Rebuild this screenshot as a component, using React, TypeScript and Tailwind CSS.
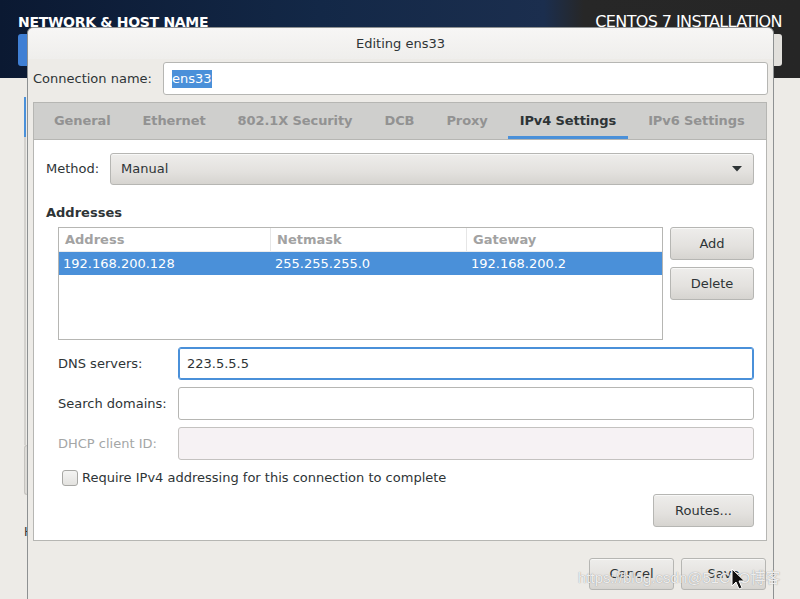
const TABS = [
  { label: 'General', active: false },
  { label: 'Ethernet', active: false },
  { label: '802.1X Security', active: false },
  { label: 'DCB', active: false },
  { label: 'Proxy', active: false },
  { label: 'IPv4 Settings', active: true },
  { label: 'IPv6 Settings', active: false },
];

const btn =
  'flex items-center justify-center rounded-[3px] border border-[#b6b6b3] bg-[linear-gradient(180deg,#eeedeb_0%,#e3e1de_60%,#d6d4d0_100%)] text-[#2e3436] shadow-[inset_0_1px_0_#f8f8f7]';

export default function App() {
  return (
    <div className="relative h-[599px] w-[800px] overflow-hidden bg-[#edebe7] font-['DejaVu_Sans',sans-serif] text-[13px] text-[#2e3436]">
      {/* installer backdrop */}
      <header className="h-[78px] bg-[linear-gradient(90deg,#0b1932_0%,#132847_40%,#1b2e4e_68%,#272727_73%,#262626_100%)] px-[18px] pt-[12px]">
        <div className="flex items-start justify-between">
          <h1 className="text-[14px] font-bold leading-[20px] tracking-[-0.3px] text-white">NETWORK &amp; HOST NAME</h1>
          <span className="text-[16px] leading-[20px] tracking-[-0.6px] text-white">CENTOS 7 INSTALLATION</span>
        </div>
        <div className="mt-[2px] flex justify-between">
          <div className="h-[32px] w-[60px] rounded-[3px] bg-[#3f7fd4]" />
          <div className="h-[32px] w-[40px] rounded-[3px] bg-[#e2e0dc]" />
        </div>
      </header>

      <div className="ml-[24px] mt-[19px] flex w-[80px] flex-col">
        <div className="h-[40px] border-l-[2px] border-[#4a90d9]" />
        <div className="h-[308px] border-l-[2px] border-[#d3d1cd]" />
        <div className="h-[50px] w-[4px] rounded-l-[3px] border border-r-0 border-[#c5c3bf] bg-[#dcdad6]" />
        <span className="mt-[30px] text-[12px] leading-[14px]">H</span>
      </div>

      {/* dialog */}
      <div className="absolute left-[27px] top-[27px] flex h-[590px] w-[747px] flex-col rounded-t-[6px] border border-[#8e9192] bg-[#edebe7]">
        <div className="flex h-[31px] items-center justify-center rounded-t-[6px] bg-[linear-gradient(180deg,#f7f6f5_0%,#efeeec_100%)] text-[13px] text-[#2e3436]">
          Editing ens33
        </div>

        <div className="flex flex-col px-[5px]">
          <div className="mt-[3px] flex h-[33px] items-center">
            <span className="w-[130px]">Connection name:</span>
            <div className="flex h-[33px] flex-1 items-center rounded-[3px] border border-[#b6b6b3] bg-white pl-[8px]">
              <span className="bg-[#4a90d9] leading-[18px] text-white">ens33</span>
            </div>
          </div>

          {/* notebook */}
          <div className="mr-[1px] mt-[7px] flex flex-col border border-[#b6b6b3] bg-white">
            <div className="flex h-[36px] gap-[8px] bg-[#cfcfcd] pl-[8px]">
              {TABS.map(({ label, active }) => (
                <div
                  key={label}
                  className={
                    active
                      ? 'flex items-center border-b-[3px] border-[#4a90d9] px-[12px] pt-[2px] font-bold tracking-[-0.1px] text-[#2e3436]'
                      : 'flex items-center px-[12px] font-bold tracking-[-0.1px] text-[#929292]'
                  }
                >
                  {label}
                </div>
              ))}
            </div>

            <div className="flex flex-col border-t border-[#b6b6b3] px-[12px] pb-[13px] pt-[12px]">
              <div className="flex h-[32px] items-center pt-[1px]">
                <span className="w-[64px]">Method:</span>
                <div className={`${btn} h-[32px] flex-1 justify-between! px-[10px]`}>
                  <span className="pt-[1px] leading-[30px]">Manual</span>
                  <svg width="10" height="6" viewBox="0 0 10 6" className="mr-[1px]">
                    <path d="M0 0h10L5 5.5z" fill="#2e3436" />
                  </svg>
                </div>
              </div>

              <div className="mt-[21px] font-bold leading-[16px]">Addresses</div>

              <div className="mt-[6px] flex gap-[7px] pl-[12px]">
                <div className="flex h-[113px] flex-1 flex-col border border-[#b6b6b3] bg-white">
                  <div className="flex h-[24px] border-b border-[#ececec] font-bold text-[#a2a2a2]">
                    <div className="flex w-[212px] items-center border-r border-[#e6e6e6] pl-[6px]">Address</div>
                    <div className="flex w-[196px] items-center border-r border-[#e6e6e6] pl-[6px]">Netmask</div>
                    <div className="flex flex-1 items-center pl-[6px]">Gateway</div>
                  </div>
                  <div className="flex h-[23px] items-center bg-[#4a90d9] text-white">
                    <div className="w-[212px] pl-[4px]">192.168.200.128</div>
                    <div className="w-[196px] pl-[4px]">255.255.255.0</div>
                    <div className="flex-1 pl-[4px]">192.168.200.2</div>
                  </div>
                </div>
                <div className="flex w-[84px] flex-col gap-[7px]">
                  <div className={`${btn} h-[33px]`}>Add</div>
                  <div className={`${btn} h-[33px]`}>Delete</div>
                </div>
              </div>

              <div className="mt-[7px] flex flex-col gap-[7px] pl-[12px]">
                <div className="flex h-[33px] items-center">
                  <span className="w-[120px]">DNS servers:</span>
                  <div className="flex h-[33px] flex-1 items-center rounded-[3px] border border-[#4a90d9] bg-white pl-[8px] shadow-[inset_0_0_0_1px_#4a90d9]">
                    223.5.5.5
                  </div>
                </div>
                <div className="flex h-[33px] items-center">
                  <span className="w-[120px]">Search domains:</span>
                  <div className="h-[33px] flex-1 rounded-[3px] border border-[#b6b6b3] bg-white" />
                </div>
                <div className="flex h-[33px] items-center">
                  <span className="w-[120px] text-[#a4a6a6]">DHCP client ID:</span>
                  <div className="h-[33px] flex-1 rounded-[3px] border border-[#c4c2c0] bg-[#f6f2f4]" />
                </div>
              </div>

              <div className="mt-[9px] flex h-[17px] items-center gap-[4px] pl-[16px]">
                <div className="h-[16px] w-[16px] rounded-[3px] border border-[#a8a8a5] bg-[linear-gradient(180deg,#f4f4f3_0%,#e3e2df_100%)]" />
                <span className="pt-[1px]">Require IPv4 addressing for this connection to complete</span>
              </div>

              <div className="mt-[8px] flex justify-end">
                <div className={`${btn} h-[33px] w-[101px]`}>Routes...</div>
              </div>
            </div>
          </div>

          <div className="mr-[2px] mt-[17px] flex justify-end gap-[7px]">
            <div className={`${btn} h-[32px] w-[85px]`}>Cancel</div>
            <div className={`${btn} h-[32px] w-[85px]`}>Save</div>
          </div>
        </div>
      </div>

      {/* watermark and pointer */}
      <span className="absolute left-[578px] top-[569px] font-['Liberation_Sans','Noto_Sans_CJK_SC',sans-serif] text-[15px] leading-[18px] text-white/85 [text-shadow:0_0_1px_#7a7a7a]">
        https://blog.csdn@51CTO博客
      </span>
      <svg className="absolute left-[731px] top-[568px]" width="13" height="22" viewBox="0 0 13 22">
        <path d="M1 1v17l4-4 3 7 3-1.3-3-6.7h5.5z" fill="#111" stroke="#fff" strokeWidth="1" />
      </svg>
    </div>
  );
}
